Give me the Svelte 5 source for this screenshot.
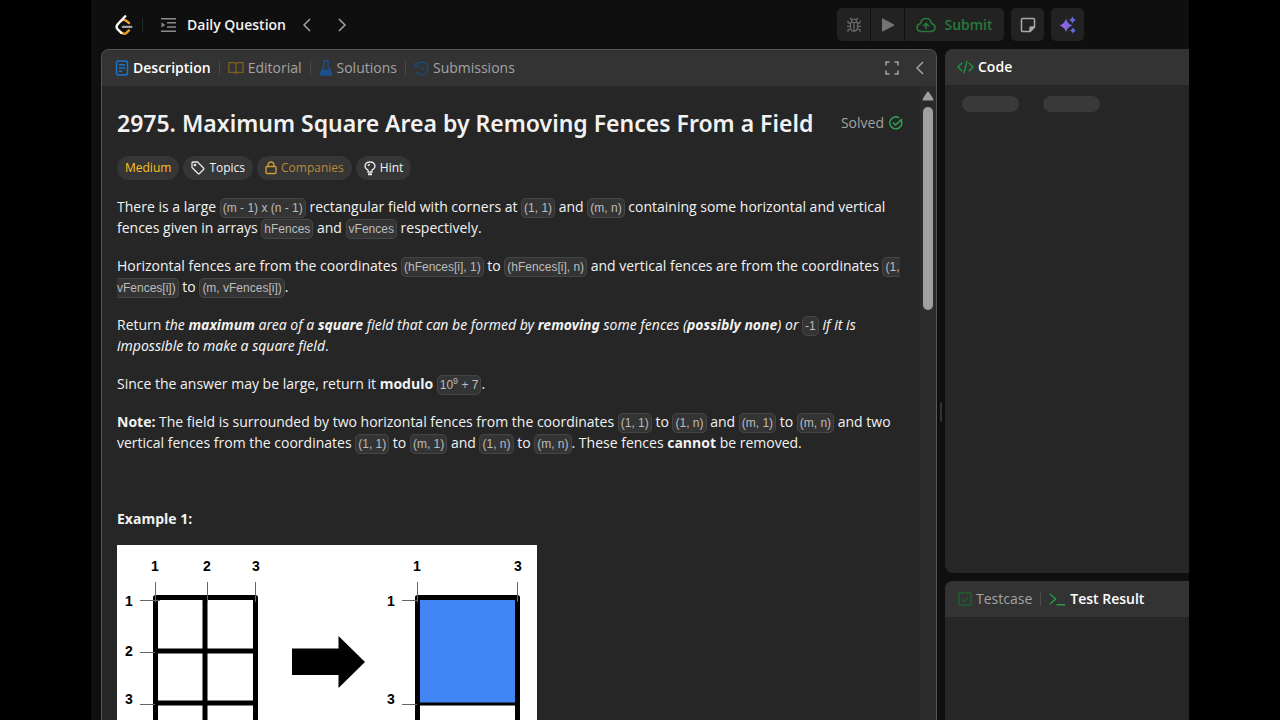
<script>
  const leftRows = [{ n: 1, y: 56 }, { n: 2, y: 106 }, { n: 3, y: 154 }];
  const leftCols = [{ n: 1, x: 38, tick: 38.5 }, { n: 2, x: 90, tick: 90.5 }, { n: 3, x: 139, tick: 138.5 }];
  const rightCols = [{ n: 1, x: 300, tick: 300.5 }, { n: 3, x: 401, tick: 400.5 }];
  const rightRows = [{ n: 1, y: 56 }, { n: 3, y: 154 }];
</script>

<div class="page">
  <header class="topbar">
    <nav class="nav" aria-label="Problems">
      <a class="logo" href="#home" aria-label="Home">
        <svg width="20" height="20" viewBox="0 0 24 24" fill="none" stroke-linecap="round" stroke-linejoin="round" stroke-width="2.800">
          <path d="M8 7.300Q11.200 4.600 14.500 6.900L18 9.600M8.800 21.200q3.200 2.600 6.200.2l2.900-2.900" stroke="#f0a12a" />
          <path d="M13.500 1.500L4.300 11.300q-2.500 3 .2 6l4.300 4.100" stroke="#fff" />
          <path d="M10.600 14.200H20.800" stroke="#a5a5a5" />
        </svg>
      </a>
      <span class="rule"></span>
      <a class="daily" href="#list">
        <svg width="17" height="16" viewBox="0 0 17 16" fill="none" stroke="#8b8b8b" stroke-width="1.4">
          <path d="M1 1.700h15M7 5.800h9M7 10h9M1 14.200h15" /><path d="M1.500 5.200v5.400l3.700-2.700z" fill="#8b8b8b" stroke="none" />
        </svg>
        Daily Question
      </a>
      <button class="arrow" aria-label="Previous question"><svg width="8" height="14" viewBox="0 0 8 14"><path d="M7 1L1 7l6 6" /></svg></button>
      <button class="arrow" aria-label="Next question"><svg width="8" height="14" viewBox="0 0 8 14"><path d="M1 1l6 6-6 6" /></svg></button>
    </nav>
    <div class="actions">
      <div class="group">
        <button class="tool" aria-label="Debug">
          <svg width="16" height="16" viewBox="0 0 16 16" fill="none" stroke="#6c6c6c" stroke-width="1.200">
            <path d="M4.500 5.500h7v4.700q0 4-3.500 4t-3.500-4zM5.500 5.500V4Q6 2 8 2t2.500 2v1.500M8 5.500v8.700M4.500 9.300H1M4.500 7L2 5.700V3.500M4.600 11.800L2 13v2M11.500 9.300H15M11.500 7L14 5.700V3.500M11.400 11.800L14 13v2M4 1l1.800 1.800M12 1l-1.800 1.800" />
          </svg>
        </button>
        <button class="tool" aria-label="Run"><svg width="14" height="16" viewBox="0 0 14 16"><path d="M1.500 1.800v12.400l11.500-6.200z" fill="#737373" stroke="#737373" stroke-linejoin="round" /></svg></button>
        <button class="submit">
          <svg width="20" height="16" viewBox="0 0 20 16" fill="none" stroke="#257a3c" stroke-width="1.600" stroke-linecap="round" stroke-linejoin="round"><path d="M5 14.500Q1 14 1 10.500 1 7.500 4.500 6.500 5.300 1.500 10 1.500t5.500 5q3.500 1 3.500 4 0 3.500-4 4zM10 11.500V6.500M7.500 8.800L10 6.300l2.500 2.500" /></svg>
          Submit
        </button>
      </div>
      <button class="square" aria-label="Notes"><svg width="16" height="16" viewBox="0 0 16 16" fill="none" stroke="#a8a8a8" stroke-width="1.500" stroke-linejoin="round"><path d="M2.500 1.500h11q1 0 1 1V10L10 14.500H2.500q-1 0-1-1v-11q0-1 1-1z" /><path d="M14.500 10H11q-1 0-1 1v3.500z" fill="#a8a8a8" /></svg></button>
      <button class="square" aria-label="Assistant"><svg width="18" height="18" viewBox="0 0 18 18"><defs><linearGradient id="spark"><stop stop-color="#a363e5" /><stop offset="1" stop-color="#5367d9" /></linearGradient></defs><path d="M7 2.500Q8.500 8 13.500 9.500 8.500 11 7 16 5.500 11 .5 9.500 5.500 8 7 2.500zM13.500 .5q.8 2.700 3.500 3.500-2.700.8-3.500 3.500Q12.700 4.800 10 4q2.700-.8 3.500-3.500zM14 11.500q.8 2.200 3 3-2.200.8-3 3-.8-2.200-3-3 2.200-.8 3-3z" fill="url(#spark)" /></svg></button>
    </div>
  </header>

  <main class="work">
    <section class="panel problem">
      <div class="tabs">
        <button class="tab active"><svg width="14" height="16" viewBox="0 0 14 16" fill="none" stroke="#1973d1" stroke-width="1.500"><rect x="1.500" y="1" width="11" height="14" rx="2" /><path d="M4 4.700h6M4 8h6M4 11.300h3" /></svg>Description</button>
        <span class="rule"></span>
        <button class="tab"><svg width="16" height="14" viewBox="0 0 18 14" fill="none" stroke="#7d611c" stroke-width="1.500"><path d="M9 2v11M9 2Q8 1 6.500 1H1v11H7q1.500 0 2 1 .5-1 2-1h6V1H11.500Q10 1 9 2z" /></svg>Editorial</button>
        <span class="rule"></span>
        <button class="tab"><svg width="14" height="16" viewBox="0 0 14 16" fill="none" stroke="#1b518b" stroke-width="1.300"><path d="M4 1h6M5 1v5L1.500 13q-.5 1.800 1 2h9q1.500-.2 1-2L9 6V1" /><path d="M3.500 9.500h7l2 4.500q-.3 1-1 1h-9q-1-.3-1-1z" fill="#1b518b" stroke="none" /></svg>Solutions</button>
        <span class="rule"></span>
        <button class="tab"><svg width="15" height="15" viewBox="0 0 15 15" fill="none" stroke="#20486f" stroke-width="1.400"><path d="M1 1.500v4h4M1.500 5Q3.500 1 8 1q6 .5 6 6.500T8 14q-3.500 0-5.500-3M8 4.500v3.300l2.500 1.500" /></svg>Submissions</button>
        <span class="space"></span>
        <button class="plain" aria-label="Full screen"><svg width="14" height="14" viewBox="0 0 14 14" fill="none" stroke="#a5a5a5" stroke-width="1.500"><path d="M1 4.500V1h3.500M9.500 1H13v3.500M13 9.500V13H9.500M4.500 13H1V9.500" /></svg></button>
        <button class="arrow" aria-label="Collapse panel"><svg width="8" height="14" viewBox="0 0 8 14"><path d="M7 1L1 7l6 6" /></svg></button>
      </div>
      <div class="scroller">
        <article class="content">
          <div class="heading">
            <h1>2975. Maximum Square Area by Removing Fences From a Field</h1>
            <span class="solved">Solved <svg width="14" height="14" viewBox="0 0 14 14" fill="none" stroke="#2cab55" stroke-width="1.400"><path d="M12.300 4.500a6 6 0 1 1-2.300-2.700M4 6.500l2.500 2.500L13 3" /></svg></span>
          </div>
          <div class="tags">
            <span class="tag medium">Medium</span>
            <button class="tag"><svg width="14" height="14" viewBox="0 0 14 14" fill="none" stroke="#e8e8e8" stroke-width="1.300" stroke-linejoin="round"><path d="M1 2q0-1 1-1h4.500l6 6q.8.800 0 1.500L8.500 12.500q-.8.800-1.500 0L1 6.500z" /><circle cx="4" cy="4" r=".7" /></svg>Topics</button>
            <button class="tag companies"><svg width="12" height="14" viewBox="0 0 12 14" fill="none" stroke="#d19a36" stroke-width="1.400"><rect x="1" y="5.500" width="10" height="7" rx="1" /><path d="M3 5.500V4q.3-3 3-3t3 3v1.500" /></svg>Companies</button>
            <button class="tag"><svg width="12" height="15" viewBox="0 0 12 15" fill="none" stroke="#e8e8e8" stroke-width="1.300"><path d="M4 11V9Q1 7.500 1 5q.5-4 5-4t5 4q0 2.500-3 4v2zM4 5q.5-1.500 2-1.500" /><path d="M4 13.300h4" stroke-width="2" /></svg>Hint</button>
          </div>
          <div class="text">
            <p>There is a large <code>(m - 1) x (n - 1)</code> rectangular field with corners at <code>(1, 1)</code> and <code>(m, n)</code> containing some horizontal and vertical fences given in arrays <code>hFences</code> and <code>vFences</code> respectively.</p>
            <p>Horizontal fences are from the coordinates <code>(hFences[i], 1)</code> to <code>(hFences[i], n)</code> and vertical fences are from the coordinates <code>(1, vFences[i])</code> to <code>(m, vFences[i])</code>.</p>
            <p>Return <em>the <strong>maximum</strong> area of a <strong>square</strong> field that can be formed by <strong>removing</strong> some fences (<strong>possibly none</strong>) or</em> <code>-1</code> <em>if it is impossible to make a square field</em>.</p>
            <p>Since the answer may be large, return it <strong>modulo</strong> <code>10<sup>9</sup> + 7</code>.</p>
            <p><strong>Note:</strong> The field is surrounded by two horizontal fences from the coordinates <code>(1, 1)</code> to <code>(1, n)</code> and <code>(m, 1)</code> to <code>(m, n)</code> and two vertical fences from the coordinates <code>(1, 1)</code> to <code>(m, 1)</code> and <code>(1, n)</code> to <code>(m, n)</code>. These fences <strong>cannot</strong> be removed.</p>
            <p>&nbsp;</p>
            <p class="caption"><strong>Example 1:</strong></p>
            <svg class="figure" width="420" height="240" viewBox="0 0 420 240" role="img" aria-label="Removing fences from a field">
              <rect width="420" height="240" fill="#fff" />
              <rect x="302" y="53" width="98" height="106" fill="#4285f4" />
              <g fill="none" stroke="#000" stroke-width="5" stroke-linejoin="round">
                <path d="M38.500 240V52.500h100V240M88 52v188M38 106h100M38 158h100" />
                <path d="M300.500 240V52.500h100V240" /><path d="M300 159h100" stroke-width="3" />
              </g>
              <g stroke="#666" stroke-width="1">
                {#each [...leftCols, ...rightCols] as c}<path d="M{c.tick} 37v20" />{/each}
                <path d="M23 55.500h20M23 107.500h15M23 159.500h15M285 55.500h15M285 159.500h15" />
              </g>
              <path d="M175 103.500h46.500V91L248 117l-26.500 26v-13H175z" />
              <g class="labels">
                {#each [...leftCols, ...rightCols] as c}<text x={c.x} y="26">{c.n}</text>{/each}
                {#each leftRows as r}<text x="12" y={r.y + 5}>{r.n}</text>{/each}
                {#each rightRows as r}<text x="274" y={r.y + 5}>{r.n}</text>{/each}
              </g>
            </svg>
          </div>
        </article>
        <div class="track"><svg width="12" height="10" viewBox="0 0 12 10"><path d="M6 1.500L10.500 8.500h-9z" fill="#a0a0a0" stroke="#a0a0a0" stroke-width="2" stroke-linejoin="round" /></svg><div class="thumb"></div></div>
      </div>
    </section>

    <div class="divider"><span></span></div>

    <div class="side">
      <section class="panel code">
        <div class="tabs"><button class="tab active"><svg width="17" height="14" viewBox="0 0 18 14" fill="none" stroke="#1f9442" stroke-width="1.500" stroke-linecap="round"><path d="M5 3L1 7l4 4M13 3l4 4-4 4M10.500 1l-3 12" /></svg>Code</button></div>
        <div class="skeleton"><span></span><span></span></div>
      </section>
      <section class="panel result">
        <div class="tabs">
          <button class="tab"><svg width="14" height="14" viewBox="0 0 14 14" fill="none" stroke="#20602f" stroke-width="1.400"><rect x="1" y="1" width="12" height="12" rx="1" /><path d="M4 7l2.300 2.300L10.500 5" /></svg>Testcase</button>
          <span class="rule"></span>
          <button class="tab active"><svg width="17" height="14" viewBox="0 0 18 14" fill="none" stroke="#1f9e44" stroke-width="1.500"><path d="M1 1.500l6 5.500-6 5.500M8 13h9" /></svg>Test Result</button>
        </div>
      </section>
    </div>
  </main>
</div>

<style>
  :global(body) { margin: 0; background: #000; }
  * { box-sizing: border-box; }
  .page { height: 100vh; margin: 0 91px; overflow: hidden; display: flex; flex-direction: column; background: #0f0f0f; color: #f2f2f2; font: 14px/20px "Open Sans", "Noto Sans", sans-serif; }
  button { font: inherit; color: inherit; border: 0; padding: 0; background: none; display: flex; align-items: center; }
  a { color: inherit; text-decoration: none; }
  svg { flex: none; display: block; }
  .topbar { height: 49px; flex: none; display: flex; align-items: center; justify-content: space-between; padding: 0 105px 0 23px; }
  .nav, .actions, .group, .daily { display: flex; align-items: center; }
  .rule { width: 1px; height: 14px; background: #4a4a4a; flex: none; }
  .nav .rule { margin: 0 17px 0 8px; background: #252525; }
  .daily { gap: 10px; font-weight: 600; margin-right: 17px; }
  .nav .arrow { margin-right: 27px; }
  .arrow svg { fill: none; stroke: #a5a5a5; stroke-width: 1.5; }
  .actions { gap: 7px; }
  .group { gap: 1px; border-radius: 5px; overflow: hidden; }
  .group button, .square { height: 33px; background: #222; justify-content: center; }
  .tool, .square { width: 33px; }
  .square { border-radius: 5px; }
  .group .submit { width: 99px; gap: 8px; color: #257a3c; font-weight: 600; }
  .work { flex: 1; min-height: 0; display: grid; grid-template-columns: minmax(0, 836fr) 8px minmax(0, 244fr); padding-left: 10px; }
  .panel { background: #262626; display: flex; flex-direction: column; overflow: hidden; }
  .problem { border: 1px solid #555; border-bottom: 0; border-radius: 8px 8px 0 0; min-height: 0; }
  .tabs { height: 36px; flex: none; display: flex; align-items: center; gap: 8px; padding: 0 12px 0 13px; background: #333; }
  .code .tabs { padding-left: 12px; }
  .tab { gap: 4px; color: #a3a3a3; white-space: nowrap; }
  .tab.active { color: #fff; font-weight: 600; }
  .space { flex: 1; }
  .plain { margin-right: 9px; }
  .scroller { flex: 1; min-height: 0; display: flex; overflow: hidden; }
  .content { flex: 1; min-width: 0; padding: 19px 17px 0 15px; }
  .heading { display: flex; align-items: center; justify-content: space-between; height: 36px; white-space: nowrap; }
  h1 { margin: 0; font: 600 23px/36px "Noto Sans", "Open Sans", sans-serif; }
  .solved { display: flex; align-items: center; gap: 5px; color: #a3a3a3; }
  .tags { display: flex; gap: 4px; margin-top: 15px; }
  .tag { height: 24px; padding: 0 8px; display: flex; align-items: center; gap: 4px; border-radius: 12px; background: #363636; font-size: 12px; }
  .medium { color: #ffc01e; }
  .companies { color: #b98a3b; }
  .text { margin-top: 16px; line-height: 21px; }
  p { margin: 0 0 17px; }
  .caption { margin-bottom: 16px; }
  em { font-family: "Noto Sans", "Open Sans", sans-serif; }
  code { font: 12px/18px "Liberation Sans", Arial, sans-serif; color: #bcbcbc; background: #343434; border: 1px solid #454545; border-radius: 5px; padding: 2px; }
  sup { font-size: 9px; line-height: 0; }
  .labels { font: bold 14px "Liberation Sans", Arial, sans-serif; text-anchor: middle; }
  .track { width: 16px; flex: none; background: #2b2b2b; padding: 5px 2px; display: flex; flex-direction: column; align-items: center; gap: 6px; }
  .thumb { width: 10px; height: 203px; border-radius: 5px; background: #a0a0a0; }
  .divider { display: flex; align-items: center; justify-content: center; padding-top: 54px; }
  .divider span { width: 2px; height: 20px; border-radius: 1px; background: #333; }
  .side { display: grid; grid-template-rows: minmax(0, 524fr) minmax(0, 139fr); gap: 8px; min-height: 0; }
  .code { border-radius: 8px 0 0 8px; }
  .result { border-radius: 8px 0 0 0; }
  .skeleton { display: flex; gap: 24px; padding: 11px 17px; }
  .skeleton span { width: 57px; height: 16px; border-radius: 8px; background: #393939; }
</style>
